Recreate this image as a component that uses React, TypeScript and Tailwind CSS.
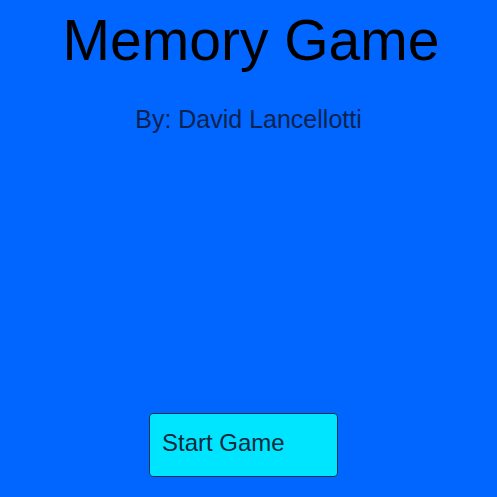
import * as React from "react";

export default function App() {
  return (
    <div
      className="flex min-h-[497px] w-full flex-col bg-[#0066ff]"
      style={{ fontFamily: '"Liberation Sans", Arial, sans-serif' }}
    >
      <h1 className="mt-[12px] pl-[5px] text-center text-[57px] leading-none text-black">
        Memory Game
      </h1>
      <p className="mt-[38px] text-center text-[25px] leading-none text-[#0b2350]">
        By: David Lancellotti
      </p>
      <div className="mt-[281px] pl-[149px]">
        <button className="flex h-[64px] w-[189px] items-center rounded-[4px] border border-[#0a3050] bg-[#00e5ff] pb-[5px] pl-[12px] text-[24px] leading-none text-[#0a2a3a]">
          Start Game
        </button>
      </div>
    </div>
  );
}
